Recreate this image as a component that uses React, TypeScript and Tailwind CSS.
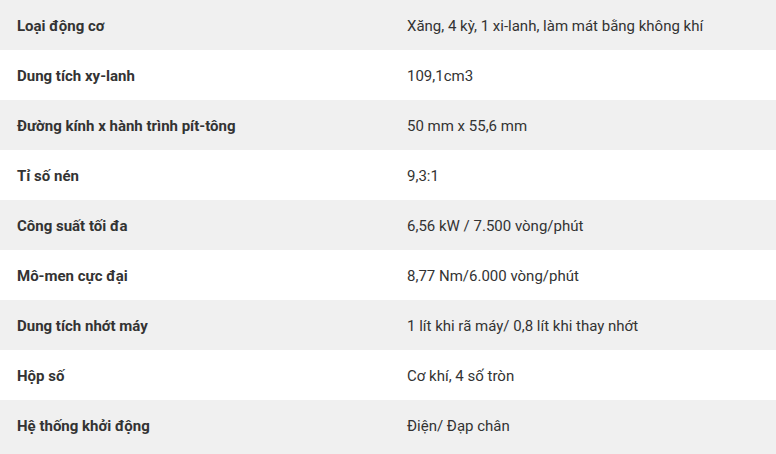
import React from "react";

const rows: [string, string][] = [
  ["Loại động cơ", "Xăng, 4 kỳ, 1 xi-lanh, làm mát bằng không khí"],
  ["Dung tích xy-lanh", "109,1cm3"],
  ["Đường kính x hành trình pít-tông", "50 mm x 55,6 mm"],
  ["Tỉ số nén", "9,3:1"],
  ["Công suất tối đa", "6,56 kW / 7.500 vòng/phút"],
  ["Mô-men cực đại", "8,77 Nm/6.000 vòng/phút"],
  ["Dung tích nhớt máy", "1 lít khi rã máy/ 0,8 lít khi thay nhớt"],
  ["Hộp số", "Cơ khí, 4 số tròn"],
  ["Hệ thống khởi động", "Điện/ Đạp chân"],
];

export default function App() {
  return (
    <div
      className="w-[776px] h-[454px] bg-[#f0f0f0] text-[15px] leading-[20px] text-[#333333]"
      style={{ fontFamily: "Roboto, 'Liberation Sans', sans-serif" }}
    >
      {rows.map(([k, v], i) => (
        <div
          key={k}
          className={`grid grid-cols-[390px_1fr] h-[50px] items-center pt-[1px] ${
            i % 2 === 0 ? "bg-[#f0f0f0]" : "bg-white"
          }`}
        >
          <div className="pl-[17px] font-bold">{k}</div>
          <div className="pl-[17px]">{v}</div>
        </div>
      ))}
    </div>
  );
}
